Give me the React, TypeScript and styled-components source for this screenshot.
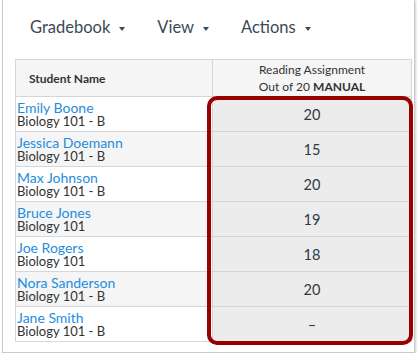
import styled, { createGlobalStyle } from "styled-components";

type Student = {
  name: string;
  section: string;
  grade: string;
};

const students: Student[] = [
  { name: "Emily Boone", section: "Biology 101 - B", grade: "20" },
  { name: "Jessica Doemann", section: "Biology 101 - B", grade: "15" },
  { name: "Max Johnson", section: "Biology 101 - B", grade: "20" },
  { name: "Bruce Jones", section: "Biology 101", grade: "19" },
  { name: "Joe Rogers", section: "Biology 101", grade: "18" },
  { name: "Nora Sanderson", section: "Biology 101 - B", grade: "20" },
  { name: "Jane Smith", section: "Biology 101 - B", grade: "–" },
];

const menus = ["Gradebook", "View", "Actions"];

const GlobalStyle = createGlobalStyle`
  body {
    margin: 0;
    background: #ffffff;
    font-family: Lato, "Open Sans", "Liberation Sans", sans-serif;
  }
`;

export default function App() {
  return (
    <>
      <GlobalStyle />
      <Frame>
        <Toolbar>
          {menus.map((label) => (
            <MenuItem key={label}>
              {label}
              <Caret />
            </MenuItem>
          ))}
        </Toolbar>
        <TableWrap>
          <GradeTable>
            <thead>
              <tr>
                <NameHead>Student Name</NameHead>
                <AssignmentHead>
                  Reading Assignment
                  <br />
                  Out of 20 <b>MANUAL</b>
                </AssignmentHead>
              </tr>
            </thead>
            <tbody>
              {students.map((s, i) => (
                <Row key={s.name} $striped={i % 2 === 1}>
                  <NameCell>
                    <StudentLink>{s.name}</StudentLink>
                    <Section>{s.section}</Section>
                  </NameCell>
                  <GradeCell>{s.grade}</GradeCell>
                </Row>
              ))}
            </tbody>
          </GradeTable>
          <Highlight />
        </TableWrap>
      </Frame>
    </>
  );
}

const Frame = styled.div`
  margin-left: 2px;
  width: 413px;
  height: 353px;
  box-sizing: border-box;
  border: 1px solid #c9c9c9;
  border-top: none;
  box-shadow: 1px 1px 2px rgba(0, 0, 0, 0.18);
  background: #ffffff;
  display: flex;
  flex-direction: column;
`;

const Toolbar = styled.div`
  height: 59px;
  display: flex;
  align-items: center;
  gap: 32px;
  padding: 0 0 5px 27px;
  box-sizing: border-box;
`;

const MenuItem = styled.div`
  display: flex;
  align-items: center;
  font-size: 16.5px;
  color: #3b4a55;
`;

const Caret = styled.span`
  display: inline-block;
  margin-left: 9px;
  margin-top: 3px;
  width: 0;
  height: 0;
  border-left: 3.5px solid transparent;
  border-right: 3.5px solid transparent;
  border-top: 4.5px solid #3b4a55;
`;

const TableWrap = styled.div`
  position: relative;
  margin-left: 12px;
  width: 397px;
`;

const GradeTable = styled.table`
  width: 397px;
  border-collapse: collapse;
  table-layout: fixed;
  color: #333333;
`;

const HeadCell = styled.th`
  height: 37px;
  box-sizing: border-box;
  background: #f5f5f5;
  border: 1px solid #d6d6d6;
  font-size: 12px;
  line-height: 17px;
  color: #333333;
  padding: 0;
`;

const NameHead = styled(HeadCell)`
  width: 197px;
  text-align: left;
  padding-left: 13px;
  font-weight: 700;
`;

const AssignmentHead = styled(HeadCell)`
  text-align: center;
  font-weight: 400;

  b {
    font-weight: 700;
  }
`;

const Row = styled.tr<{ $striped: boolean }>`
  height: 35px;
  background: ${(p) => (p.$striped ? "#f5f5f5" : "#ffffff")};
`;

const NameCell = styled.td`
  padding: 4px 0 0 1px;
  border: 1px solid #d6d6d6;
  border-right: none;
  vertical-align: top;
`;

const StudentLink = styled.div`
  font-size: 14px;
  line-height: 14px;
  color: #1f8ddd;
`;

const Section = styled.div`
  font-size: 13px;
  line-height: 13px;
  color: #333333;
`;

const GradeCell = styled.td`
  background: #ececec;
  border: 1px solid #d4d4d4;
  text-align: center;
  vertical-align: middle;
  font-size: 14.5px;
  color: #2d3b45;
`;

const Highlight = styled.div`
  position: absolute;
  left: 192px;
  top: 37px;
  width: 206px;
  height: 249px;
  box-sizing: border-box;
  border: 4px solid #990000;
  border-radius: 10px;
  pointer-events: none;
`;
